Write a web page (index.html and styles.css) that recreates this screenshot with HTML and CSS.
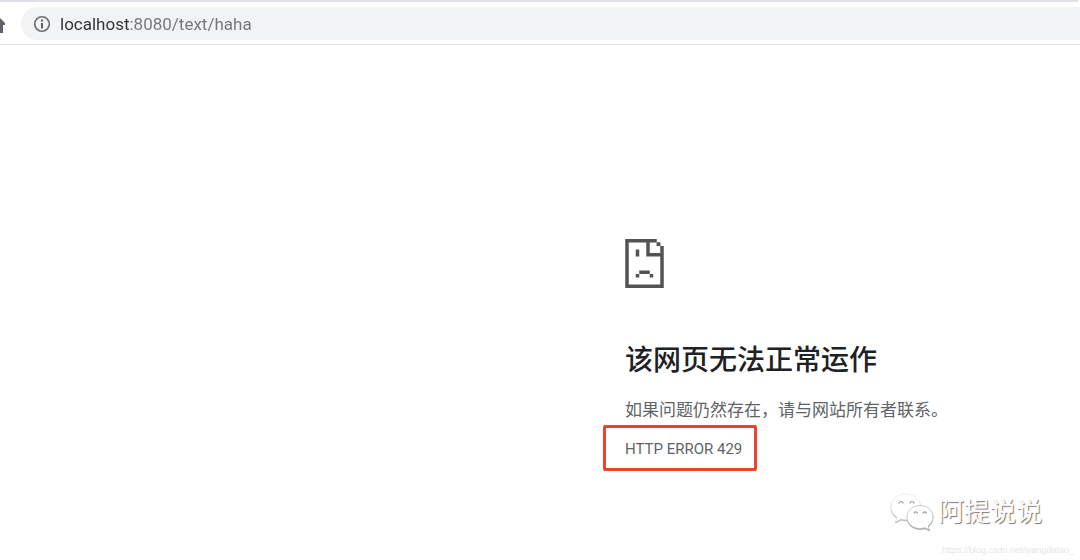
FILE: index.html
```html
<!DOCTYPE html>
<html lang="zh-CN">

<head>
    <meta charset="UTF-8">
    <title>localhost</title>
    <link rel="stylesheet" href="styles.css">
</head>

<body>
    <header class="browser">
        <div class="tab-strip"></div>
        <div class="toolbar">
            <button class="home" aria-label="主页">
                <svg width="6" height="18" viewBox="0 0 6 18">
                    <path d="M0 3 L5 8 V10 H3 V18 H0 Z" fill="#5f6368" />
                </svg>
            </button>
            <label class="address-bar">
                <svg width="18" height="18" viewBox="0 0 18 18">
                    <circle cx="9" cy="9" r="7.3" fill="none" stroke="#6a6e72" stroke-width="1.6" />
                    <path d="M8 4.6h2v2H8zM8 8h2v5.4H8z" fill="#5f6368" />
                </svg>
                <input class="url" type="text" value="localhost:8080/text/haha" aria-label="地址">
            </label>
        </div>
    </header>

    <main class="error-page">
        <svg class="sad-icon" width="39" height="49" viewBox="0 0 11 14">
            <path fill="#535353" fill-rule="evenodd" d="M0 0H9V1H10V2H11V14H0ZM1 1V13H10V5H6V1ZM7 1V4H10V2H9V1Z" />
            <path fill="#535353" d="M9 1h1v1H9zM3 3h1v2H3zM4 9h3v1H4zM3 10h1v1H3zM7 10h1v1H7z" />
        </svg>
        <h1>该网页无法正常运作</h1>
        <p class="summary">如果问题仍然存在，请与网站所有者联系。</p>
        <div class="error-code">HTTP ERROR 429</div>
    </main>

    <!-- 水印 -->
    <footer class="watermark">
        <div class="account">
            <svg class="bubbles" width="44" height="38" viewBox="0 0 44 38">
                <g fill="#fff" stroke="#e4e4e4" stroke-width="0.6">
                    <path d="M16 1C7.500 1 1 6.500 1 14c0 4.500 2.300 8 6 10.300L5.500 29l5.500-3c2 .6 4 .8 6 .8 8 0 14-5.500 14-12.500S24 1 16 1z" />
                    <path class="bubble-front" d="M30 12.500c-7.500 0-13 5-13 11.500s5.500 11.500 13 11.500c1.800 0 3.400-.2 5-.8l4.500 2.300-1.300-4c3-2.200 4.800-5.300 4.800-9 0-6.500-5.500-11.500-13-11.500z" stroke="#aaa" />
                </g>
                <g fill="none" stroke="#999" stroke-width="1.200">
                    <path d="M9 10.500a2 2 0 0 1 4 0M20 10.500a2 2 0 0 1 4 0" />
                    <path d="M24 20.500a1.700 1.700 0 0 1 3.400 0M33 20.500a1.700 1.700 0 0 1 3.400 0" />
                </g>
            </svg>
            <span class="name">阿提说说</span>
        </div>
        <div class="source">https://blog.csdn.net/wangdatao_</div>
    </footer>
</body>

</html>
```
FILE: styles.css
```css
* {
    box-sizing: border-box;
}

body {
    margin: 0;
    min-height: 100vh;
    position: relative;
    background-color: #fff;
    color: #5f6368;
    font-family: Roboto, "Noto Sans CJK SC", sans-serif;
}

/* 浏览器工具栏 */
.browser {
    border-bottom: 1px solid #dee1e6;
}

.tab-strip {
    height: 2px;
    margin-right: 2px;
    background-color: #dee1e6;
}

.toolbar {
    display: flex;
    align-items: center;
    gap: 15px;
    padding: 5px 0 4px;
}

.home {
    display: flex;
    padding: 0;
    border: none;
    background: none;
}

.address-bar {
    flex: 1;
    display: flex;
    align-items: center;
    gap: 9px;
    height: 33px;
    padding-left: 12px;
    border-radius: 17px 0 0 17px;
    background-color: #f1f3f4;
}

/* 主机名深色，其余部分浅色 */
.url {
    flex: 1;
    padding: 0;
    border: none;
    outline: none;
    background: linear-gradient(to right, #303134 70px, #72767a 70px);
    -webkit-background-clip: text;
    background-clip: text;
    -webkit-text-fill-color: transparent;
    font-family: Roboto, sans-serif;
    font-size: 17px;
    line-height: 24px;
}

/* 错误信息 */
.error-page {
    padding: 194px 20px 0 625px;
}

.sad-icon {
    display: block;
}

h1 {
    margin: 52px 0 0;
    color: #202124;
    font-size: 28px;
    font-weight: 500;
    line-height: 42px;
}

.summary {
    margin: 14px 0 0;
    font-size: 17px;
    line-height: 28px;
}

.error-code {
    width: 154px;
    margin: 1px 0 0 -22px;
    padding: 3px 18px 0 19px;
    border: 3px solid #ee432c;
    border-radius: 2px;
    font-size: 15px;
    line-height: 37px;
    white-space: nowrap;
}

.watermark {
    position: absolute;
    right: 6px;
    bottom: 3px;
}

.account {
    display: flex;
    align-items: center;
    gap: 4px;
    margin-left: -52px;
}

.bubbles {
    filter: drop-shadow(0 1px 0 #aaa);
}

.name {
    color: #fff;
    font-size: 26px;
    line-height: 40px;
    text-shadow: 1px 1px 1px #777;
}

.source {
    margin-top: 11px;
    color: #e6e6e6;
    font-family: "Liberation Sans", sans-serif;
    font-size: 9px;
    line-height: 14px;
}
```
